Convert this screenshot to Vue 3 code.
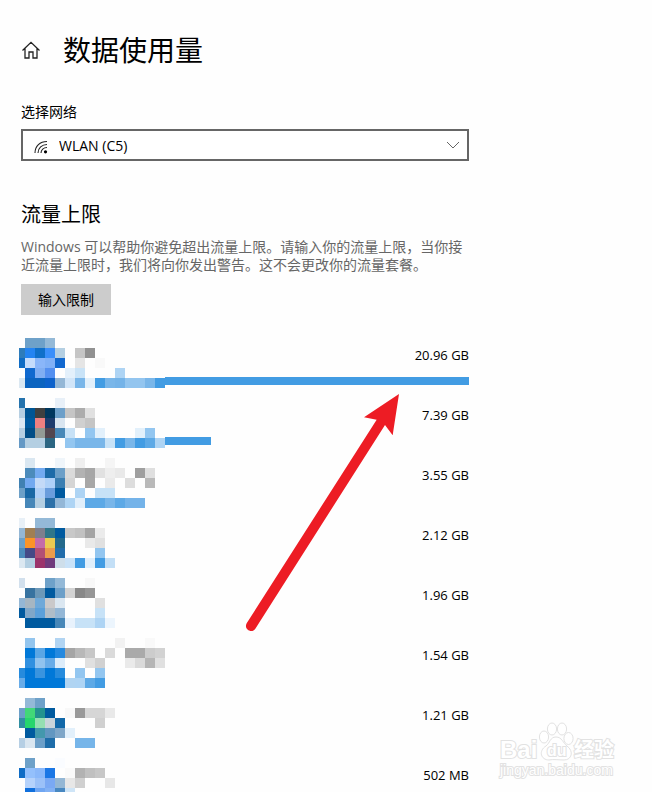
<template>
  <div class="page">
    <main class="content">
      <header class="title">
        <svg class="home" viewBox="0 0 20 20" aria-hidden="true">
          <path d="M1.5 10.5 L10 2.3 L18.5 10.5 M4 8.5 V18 H8 V12 H12 V18 H16 V8.5" />
        </svg>
        <h1>数据使用量</h1>
      </header>

      <label class="network-label" for="network">选择网络</label>
      <div class="network">
        <svg class="wifi" viewBox="0 0 14 14" aria-hidden="true">
          <path d="M1 13 C1 6 6 1.5 13 1.5" />
          <path d="M4 13 C4 8 8 4.5 13 4.5" />
          <path d="M7 13 C7 10 9.5 7.5 13 7.5" />
          <circle cx="11.5" cy="11.8" r="1.6" />
        </svg>
        <select id="network" v-model="network">
          <option value="wlan">WLAN (C5)</option>
        </select>
        <svg class="arrow-down" viewBox="0 0 14 8" aria-hidden="true">
          <path d="M1 1 L7 7 L13 1" />
        </svg>
      </div>

      <h2>流量上限</h2>
      <p class="desc">
        Windows 可以帮助你避免超出流量上限。请输入你的流量上限，当你接近流量上限时，我们将向你发出警告。这不会更改你的流量套餐。
      </p>
      <button type="button" class="limit">输入限制</button>

      <ul class="apps">
        <li v-for="app in apps" :key="app.usage" class="app">
          <svg class="mosaic" viewBox="4 0 146 50" shape-rendering="crispEdges" aria-hidden="true">
            <rect
              v-for="cell in getCells(app.rows)"
              :key="cell.x + '-' + cell.y"
              :x="cell.x"
              :y="cell.y"
              width="10"
              height="10"
              :fill="cell.color"
            />
          </svg>
          <div class="detail">
            <span class="usage">{{ app.usage }}</span>
            <div v-if="app.bar" class="bar" :style="{ width: app.bar + '%' }"></div>
          </div>
        </li>
      </ul>
    </main>

    <svg class="pointer" viewBox="0 0 540 810" aria-hidden="true">
      <path
        d="M477 72 L372 142 L410 149 L20 760 C10 778 36 792 46 776 L435 165 L458 196 Z"
      />
    </svg>

    <svg class="watermark" viewBox="0 0 130 64" role="img" aria-label="Baidu 经验">
      <g class="paw">
        <ellipse cx="53" cy="18" rx="4.6" ry="6" />
        <ellipse cx="61" cy="10" rx="4.6" ry="6" />
        <ellipse cx="71" cy="10" rx="4.6" ry="6" />
        <ellipse cx="77.5" cy="19.5" rx="4.6" ry="6" />
        <path
          d="M65 18 C71 18 72 24 76 27 C83 32 81 41 73 41 C68 41 62 40 58 41 C50 41 47 32 55 27 C59 24 59 18 65 18 Z"
        />
      </g>
      <text class="brand" x="9" y="39">Bai</text>
      <text class="du" x="56" y="37">du</text>
      <text class="brand-cn" x="83" y="38">经验</text>
      <text class="url" x="9" y="56">jingyan.baidu.com</text>
    </svg>
  </div>
</template>

<script setup>
import { ref } from 'vue'

const network = ref('wlan')

// 每个应用的马赛克：一行五排，'-' 表示空白
const apps = [
  {
    usage: '20.96 GB',
    bar: 100,
    rows: [
      '- 6ea1c9 6ea1c9 94b9d7',
      '2e7cbb 2484f2 1070c9 3a8ffa b4cfe2 - c5c5c5 919191',
      '0f6cc5 c5dcfb 8ab6f9 80b0f6 1168cf - e5e5e5 - f9f9f9',
      '- 1069cf 80aef2 5490f0 - e3f0fb c9e3f7 - - - aed4f4',
      'dbe8f2 0c64c0 0c64c0 0d62cb 94b7d6 d1e5f8 79b6e9 e2f0fb 429ce3 79b6e9 74b3e8 93c5ef 93c5ef 79b6e9 429ce3',
    ],
  },
  {
    usage: '7.39 GB',
    bar: 15,
    rows: [
      '2573ad - - - e8f0f8',
      'b6cfe2 005594 404040 00375e 6c9fc9 c5c5c5 acacac e0e0e0',
      'dce8f2 005a9f ee8080 1d3c6d d9e5f0 - d0d0d0 c5c5c5',
      'b6cfe2 004d86 929a95 53464f 4888b8 c7e1f6 - 93c6f0 e2f0fb - - - e2f0fb 93c6f0',
      '6499c5 b4cfe2 b4cfe2 2c6682 - 93c6f0 79b6e9 79b6e9 79b6e9 c7e2f7 429ce3 79b6e9 429ce3 5da9e6 aed4f4',
    ],
  },
  {
    usage: '3.55 GB',
    rows: [
      '- dae7f1 - - eff5fa - efefef - - f5f5f5',
      '- 4c8bbb 73aaf0 1d6ba8 6c9fc8 dadada b2b2b2 a6a6a6 e1e1e1 eeeeee e9e9e9 - 9f9f9f dfdfdf',
      '4081b2 72a9f0 c4daf7 afd1f8 3c7fb2 d5d5d5 - a7a7a7 - eaeaea - dddddd - b9b9b9',
      '6da0c7 1968a5 aecff6 6a9ddc 005a9f - aed4f4 - c7e2f7 c7e2f7',
      '- 4787b8 b4cfe2 2c70a8 93b7d7 aed4f4 e1effb 5da9e6 5da9e6 79b6e9 5da9e6 74b3e9 74b3e9',
    ],
  },
  {
    usage: '2.12 GB',
    rows: [
      'e8f0f7 - 94b9d7 94b9d7',
      '94b7d5 a07f53 7d7f8d 307689 005a9f c8c8c8 c1c1c1 a4a4a4 ebebeb',
      '6ca0c8 fb9427 c46ca9 ebca51 246a8c - - e9e9e9 e0e0e0',
      '4c8bbb 454a87 b25075 eb9c4c 226dab - - - 93c6f0',
      'dce8f1 b4cfe2 9b336b 703b7d cedeea c9e2f8 429ce3 e1effb 429ce3 c3dff6',
    ],
  },
  {
    usage: '1.96 GB',
    rows: [
      'd2e0ed - - 6ea1c9 94b9d7 - - f8f8f8',
      '- 3873a0 6c98b8 005a9f 6c9fc8 d3d3d3 888888 969696',
      '94b7d5 a6b6c2 6fa9d9 cac9ca dbe7f1 - - - e0e0e0',
      '005a9f 80a7c8 5ba0da b0bdc8 94b7d6 - - - c7e2f7',
      '- 005a9f 005a9f 005a9f 4787b8 e8f2fc c7e2f7 c7e2f7 aed4f4 ecf5fd',
    ],
  },
  {
    usage: '1.54 GB',
    rows: [
      '- 93c5ee - - b1d4f2 - - - - - f2f2f2 - - f9f9f9',
      '- 0078d8 5aa6e5 0078d8 2589df a5a5a5 b8b8b8 c7c7c7 - dadada - aaaaaa aaaaaa cccccc d2d2d2',
      '- 3090e0 91c3ee 68ace8 dcecfa - - e0e0e0 d1d1d1 - - eaeaea dadada b5b5b5 e0e0e0',
      '268bdd 0078d8 3994df 0078d8 268bdd - 93c6f0 - 93c6f0',
      '68ace8 0078d8 0078d8 0078d8 0078d8 b0d4f2 aed4f4 5da9e6 429ce3',
    ],
  },
  {
    usage: '1.21 GB',
    rows: [
      '- 94b9d7 6ea1c9',
      '6c9fc8 42d878 23938e 005a9f - f8f8f8 999999 d6d6d6 d6d6d6 e9e9e9',
      '318fa2 26d66d 94dfb2 c9d4db 1168a9 - - - d0d0d0',
      '- 005a9f 4398ad 6297c1 7ea6c8 e2f0fb',
      'b6cfe4 dae6f0 6c9fc8 1e6da9 - - 76b5e9 76b5e9',
    ],
  },
  {
    usage: '502 MB',
    rows: [
      '- 6ea1c9 - - fafcff',
      '0f6cc5 94c0fc 8ab8fa 1b77e5 - fafafa b2b2b2 c0c0c0 c7c7c7',
      '- b5d2fb 9bc1f8 7aa9f4 94b7d5 e7e7e7 d0d0d0 - - e7e7e7',
      '- 1070dd 70a6f2 82b1f4 4888c1 cfe5f7',
      '',
    ],
  },
]

function getCells(rows) {
  const cells = []
  rows.forEach((row, r) => {
    row.split(' ').forEach((color, c) => {
      if (color && color !== '-') {
        cells.push({ x: c * 10, y: r * 10, color: '#' + color })
      }
    })
  })
  return cells
}
</script>

<style>
body {
  margin: 0;
  background: #fff;
}
</style>

<style scoped>
.page {
  position: relative;
  box-sizing: border-box;
  height: 100vh;
  overflow: hidden;
  padding: 31px 21px 0;
  background: #fefefe;
  color: #000;
  font-family: 'Open Sans', 'Noto Sans CJK SC', sans-serif;
  font-size: 14px;
}

.content {
  max-width: 448px;
}

.title {
  display: flex;
  align-items: center;
  gap: 22px;
}

.home {
  width: 20px;
  height: 20px;
  fill: none;
  stroke: #222;
  stroke-width: 1.3;
}

h1 {
  margin: 0;
  font-size: 28px;
  font-weight: 400;
  line-height: 38px;
}

.network-label {
  display: block;
  margin-top: 33px;
  line-height: 20px;
}

.network {
  position: relative;
  margin-top: 7px;
}

.network select {
  display: block;
  box-sizing: border-box;
  width: 100%;
  height: 32px;
  padding: 0 36px;
  border: 2px solid #666;
  border-radius: 0;
  background: #fff;
  color: #000;
  font-family: inherit;
  font-size: 14px;
  appearance: none;
}

.wifi {
  position: absolute;
  top: 11px;
  left: 13px;
  width: 14px;
  height: 14px;
  fill: none;
  stroke: #222;
  stroke-width: 1.1;
}

.wifi circle {
  fill: #000;
  stroke: none;
}

.arrow-down {
  position: absolute;
  top: 12px;
  right: 9px;
  width: 14px;
  height: 8px;
  fill: none;
  stroke: #666;
  pointer-events: none;
}

h2 {
  margin: 40px 0 0;
  font-size: 20px;
  font-weight: 400;
  line-height: 28px;
}

.desc {
  margin: 9px 0 10px;
  color: #666;
  line-height: 18px;
}

.limit {
  display: block;
  height: 31px;
  padding: 0 17px 2px;
  border: none;
  background: #ccc;
  color: #000;
  font-family: inherit;
  font-size: 14px;
}

.apps {
  margin: 23px 0 0 -2px;
  padding: 0;
  list-style: none;
}

.app {
  display: flex;
  height: 60px;
}

.mosaic {
  flex: none;
  width: 146px;
  height: 50px;
}

.detail {
  flex: 1;
}

.usage {
  display: block;
  height: 31px;
  padding-top: 8px;
  font-size: 13px;
  line-height: 18px;
  text-align: right;
}

.bar {
  height: 8px;
  background: #429ce3;
}

.pointer {
  position: absolute;
  top: 370px;
  left: 240px;
  width: 180px;
  height: 270px;
  fill: #ed1c24;
}

.watermark {
  position: absolute;
  top: 719px;
  left: 491px;
  width: 130px;
  height: 64px;
  fill: #fff;
  stroke: #e2e2e2;
  stroke-width: 1;
}

.watermark text {
  font-family: 'Liberation Sans', 'Noto Sans CJK SC', sans-serif;
  paint-order: stroke;
  stroke-width: 2;
}

.watermark .brand {
  font-size: 24px;
  font-weight: 700;
}

.watermark .du {
  font-size: 16px;
  font-weight: 700;
}

.watermark .brand-cn {
  font-size: 20px;
  font-weight: 700;
}

.watermark .url {
  font-size: 14px;
}
</style>
